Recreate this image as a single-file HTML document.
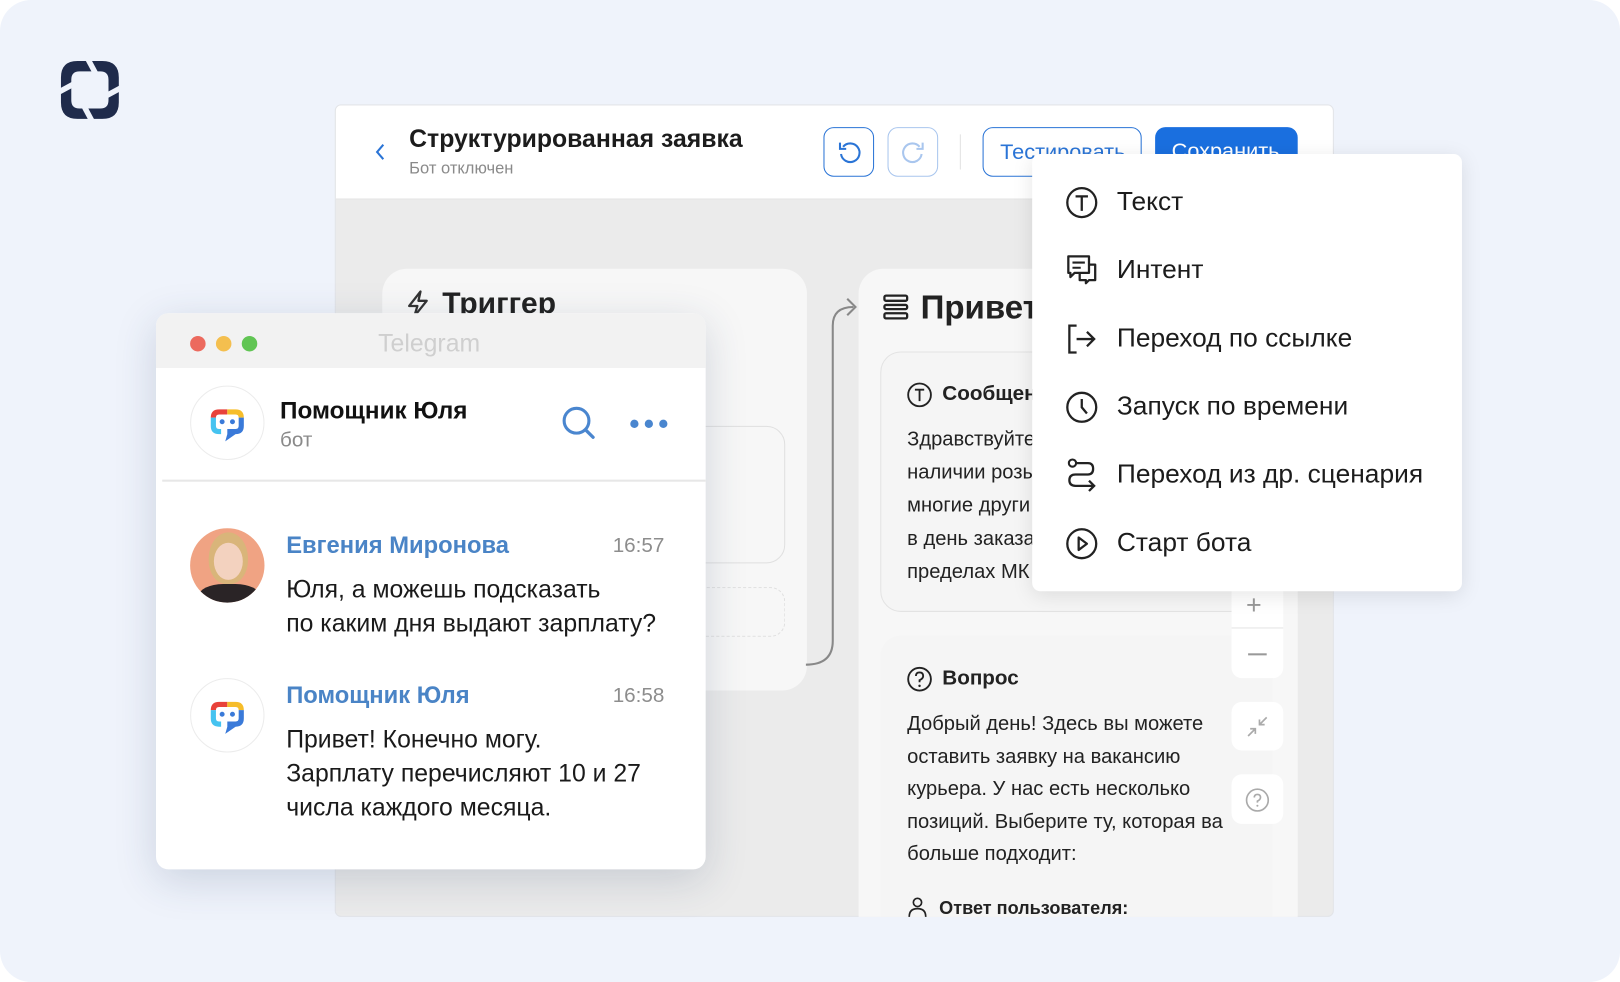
<!DOCTYPE html>
<html><head><meta charset="utf-8"><style>
*{box-sizing:border-box;margin:0;padding:0}
html,body{width:1620px;height:982px;overflow:hidden;background:#fff}
body{font-family:"Liberation Sans","Noto Sans CJK SC",sans-serif}
#w{position:absolute;left:0;top:0;width:1568px;height:950px;transform:scale(1.0332,1.0337);transform-origin:0 0;background:#eff3fb;border-radius:30px;overflow:hidden}
.a{position:absolute}
.t{position:absolute;white-space:nowrap}
</style></head><body><div id="w">
<!-- logo -->
<svg class="a" style="left:57px;top:57px" width="60" height="60" viewBox="0 0 60 60"><path fill-rule="evenodd" d="M18 2 H42 Q58 2 58 18 V42 Q58 58 42 58 H18 Q2 58 2 42 V18 Q2 2 18 2 Z M20 12 Q12 12 12 20 V40 Q12 48 20 48 H40 Q48 48 48 40 V20 Q48 12 40 12 Z" fill="#1f2b4b"/><g fill="#eff3fb"><polygon points="25,0 31,0 38,13 32,13"/><polygon points="60,25 60,31 47,38 47,32"/><polygon points="35,60 29,60 22,47 28,47"/><polygon points="0,35 0,29 13,22 13,28"/></g></svg>

<!-- app window -->
<div class="a" style="left:324px;top:101px;width:967px;height:786px;background:#ebebeb;border-radius:6px;overflow:hidden;border:1px solid #e2e4e8">
 <div class="a" style="left:0;top:0;width:967px;height:91px;background:#fff;border-bottom:1px solid #e4e4e4"></div>
</div>
<svg class="a" style="left:360px;top:137px" width="16" height="20"><path d="M11 3 L5 10 L11 17" stroke="#2a74d6" stroke-width="2" fill="none"/></svg>
<div class="t" style="left:396px;top:121px;font-size:24px;font-weight:bold;color:#1c1c1c">Структурированная заявка</div>
<div class="t" style="left:396px;top:155px;font-size:16px;color:#8a8a8a">Бот отключен</div>
<div class="a" style="left:797px;top:123px;width:49px;height:48px;border:1.5px solid #2a74d6;border-radius:10px"></div>
<svg class="a" style="left:808px;top:134px" width="28" height="28" viewBox="0 0 28 28"><path d="M8 8 A9 9 0 1 1 6 15" stroke="#2a74d6" stroke-width="2" fill="none"/><path d="M5 4 V10 H11" stroke="#2a74d6" stroke-width="2" fill="none"/></svg>
<div class="a" style="left:859px;top:123px;width:49px;height:48px;border:1.5px solid #a9c6ee;border-radius:10px"></div>
<svg class="a" style="left:870px;top:134px" width="28" height="28" viewBox="0 0 28 28"><path d="M20 8 A9 9 0 1 0 22 15" stroke="#a9c6ee" stroke-width="2" fill="none"/><path d="M23 4 V10 H17" stroke="#a9c6ee" stroke-width="2" fill="none"/></svg>
<div class="a" style="left:929px;top:130px;width:1px;height:34px;background:#e2e2e2"></div>
<div class="a" style="left:951px;top:123px;width:154px;height:48px;border:1.5px solid #2a74d6;border-radius:10px;overflow:hidden"><div class="t" style="left:16px;top:12px;font-size:21px;color:#2a74d6">Тестировать</div></div>
<div class="a" style="left:1118px;top:123px;width:138px;height:48px;background:#1a6fdf;border-radius:10px;overflow:hidden"><div class="t" style="left:16px;top:12px;font-size:21px;color:#fff">Сохранить</div></div>

<!-- trigger card -->
<div class="a" style="left:370px;top:260px;width:411px;height:408px;background:#f7f7f7;border-radius:24px"></div>
<svg class="a" style="left:392px;top:280px" width="26" height="28" viewBox="0 0 26 28"><path d="M15 2 L4 16 H12 L9 26 L21 11 H13 Z" stroke="#333" stroke-width="2.2" fill="none" stroke-linejoin="round"/></svg>
<div class="t" style="left:428px;top:278px;font-size:29px;font-weight:bold;color:#222">Триггер</div>
<div class="a" style="left:660px;top:412px;width:100px;height:133px;border:1px solid #e0e0e0;border-radius:18px"></div>
<div class="a" style="left:660px;top:568px;width:100px;height:48px;border:1.5px dashed #e0e0e0;border-radius:14px"></div>
<svg class="a" style="left:778px;top:285px" width="60" height="370"><path d="M2 358 Q28 358 28 335 V30 Q28 12 48 12" stroke="#888" stroke-width="2" fill="none"/><path d="M42 4 L50 12 L42 20" stroke="#888" stroke-width="2" fill="none"/></svg>

<!-- greeting card -->
<div class="a" style="left:831px;top:260px;width:425px;height:627px;background:#f7f7f7;border-radius:24px 24px 0 0"></div>
<svg class="a" style="left:854px;top:284px" width="26" height="26"><rect x="2" y="2" width="22" height="5" rx="1.5" stroke="#222" stroke-width="2.2" fill="none"/><rect x="2" y="11" width="22" height="4" rx="1.5" stroke="#222" stroke-width="2.2" fill="none"/><rect x="2" y="19" width="22" height="5" rx="1.5" stroke="#222" stroke-width="2.2" fill="none"/></svg>
<div class="t" style="left:891px;top:279px;font-size:32px;font-weight:bold;color:#222">Привет</div>
<div class="a" style="left:852px;top:340px;width:360px;height:252px;border:1px solid #e3e3e3;border-radius:20px;background:#f5f5f5"></div>
<svg class="a" style="left:877px;top:369px" width="26" height="26"><circle cx="13" cy="13" r="11" stroke="#222" stroke-width="1.8" fill="none"/><path d="M8.5 8 H17.5 M13 8 V19" stroke="#222" stroke-width="1.8"/></svg>
<div class="t" style="left:912px;top:370px;font-size:20px;font-weight:bold;color:#222">Сообщение</div>
<div class="a" style="left:878px;top:409px;font-size:19.5px;line-height:32px;color:#222;white-space:nowrap">Здравствуйте<br>наличии розы<br>многие други<br>в день заказа<br>пределах МК</div>
<div class="a" style="left:852px;top:615px;width:380px;height:272px;background:#f5f5f5;border-radius:20px 20px 0 0"></div>
<svg class="a" style="left:877px;top:644px" width="26" height="26"><circle cx="13" cy="13" r="11" stroke="#222" stroke-width="1.8" fill="none"/><path d="M9.5 10 Q9.5 6.5 13 6.5 Q16.5 6.5 16.5 10 Q16.5 12.5 13 14 V16" stroke="#222" stroke-width="1.8" fill="none"/><circle cx="13" cy="19.5" r="1.2" fill="#222"/></svg>
<div class="t" style="left:912px;top:645px;font-size:20px;font-weight:bold;color:#222">Вопрос</div>
<div class="a" style="left:878px;top:685px;font-size:19.5px;line-height:31.5px;color:#222;white-space:nowrap;width:306px;overflow:hidden">Добрый день! Здесь вы можете<br>оставить заявку на вакансию<br>курьера. У нас есть несколько<br>позиций. Выберите ту, которая ва<br>больше подходит:</div>
<svg class="a" style="left:877px;top:866px" width="22" height="22"><circle cx="11" cy="7" r="4" stroke="#222" stroke-width="1.6" fill="none"/><path d="M3 21 Q3 13 11 13 Q19 13 19 21" stroke="#222" stroke-width="1.6" fill="none"/></svg>
<div class="t" style="left:909px;top:868px;font-size:17.5px;font-weight:bold;color:#222">Ответ пользователя:</div>
<!-- zoom controls -->
<div class="a" style="left:1192px;top:560px;width:50px;height:96px;background:#fff;border-radius:10px"></div>
<div class="a" style="left:1192px;top:607px;width:50px;height:1px;background:#e4e4e4"></div>
<div class="t" style="left:1206px;top:570px;font-size:26px;color:#999">+</div>
<div class="a" style="left:1208px;top:632px;width:18px;height:2px;background:#999"></div>
<div class="a" style="left:1192px;top:679px;width:50px;height:47px;background:#fff;border-radius:10px"></div>
<svg class="a" style="left:1205px;top:691px" width="24" height="24"><path d="M21 3 L14 10 M14 5 V10 H19 M3 21 L10 14 M5 14 H10 V19" stroke="#aaa" stroke-width="1.6" fill="none"/></svg>
<div class="a" style="left:1192px;top:749px;width:50px;height:48px;background:#fff;border-radius:10px"></div>
<svg class="a" style="left:1204px;top:761px" width="26" height="26"><circle cx="13" cy="13" r="10.5" stroke="#aaa" stroke-width="1.6" fill="none"/><path d="M10 10.5 Q10 7.5 13 7.5 Q16 7.5 16 10.5 Q16 12.5 13 14 V15.5" stroke="#aaa" stroke-width="1.6" fill="none"/><circle cx="13" cy="18.5" r="1" fill="#aaa"/></svg>

<!-- dropdown -->
<div class="a" style="left:999px;top:149px;width:416px;height:423px;background:#fff;border-radius:8px;box-shadow:0 4px 20px rgba(0,0,0,.1)"></div>
<svg class="a" style="left:1031px;top:180px" width="32" height="32"><circle cx="16" cy="16" r="14" stroke="#222" stroke-width="2.2" fill="none"/><path d="M10 10 H22 M16 10 V24" stroke="#222" stroke-width="2.2"/></svg>
<svg class="a" style="left:1031px;top:245px" width="32" height="32"><path d="M3 3 H23 V19 H9 L5 23 V19 H3 Z" stroke="#222" stroke-width="2.2" fill="none" stroke-linejoin="round"/><path d="M7 9 H19 M7 14 H15" stroke="#222" stroke-width="2"/><path d="M23 11 H29 V26 H23 L20 29 V26 H14 V19" stroke="#222" stroke-width="2.2" fill="none" stroke-linejoin="round"/></svg>
<svg class="a" style="left:1031px;top:312px" width="32" height="32"><path d="M11 3 H4 V29 H11" stroke="#222" stroke-width="2.2" fill="none"/><path d="M11 16 H28 M21 9 L28 16 L21 23" stroke="#222" stroke-width="2.2" fill="none"/></svg>
<svg class="a" style="left:1031px;top:378px" width="32" height="32"><circle cx="16" cy="16" r="14" stroke="#222" stroke-width="2.2" fill="none"/><path d="M16 8 V16 L21 22" stroke="#222" stroke-width="2.2" fill="none"/></svg>
<svg class="a" style="left:1031px;top:443px" width="32" height="34"><circle cx="7" cy="5" r="3.5" stroke="#222" stroke-width="2" fill="none"/><path d="M11 5 H22 Q27 5 27 10.5 Q27 16 22 16 H10 Q4 16 4 21.5 Q4 27 10 27 H28 M23 22 L28 27 L23 32" stroke="#222" stroke-width="2.2" fill="none"/></svg>
<svg class="a" style="left:1031px;top:510px" width="32" height="32"><circle cx="16" cy="16" r="14" stroke="#222" stroke-width="2.2" fill="none"/><path d="M13 10 L21 16 L13 22 Z" stroke="#222" stroke-width="2.2" fill="none" stroke-linejoin="round"/></svg>
<div class="t" style="left:1081px;top:181px;font-size:25.5px;color:#1c1c1c">Текст</div>
<div class="t" style="left:1081px;top:247px;font-size:25.5px;color:#1c1c1c">Интент</div>
<div class="t" style="left:1081px;top:313px;font-size:25.5px;color:#1c1c1c">Переход по ссылке</div>
<div class="t" style="left:1081px;top:379px;font-size:25.5px;color:#1c1c1c">Запуск по времени</div>
<div class="t" style="left:1081px;top:445px;font-size:25.5px;color:#1c1c1c">Переход из др. сценария</div>
<div class="t" style="left:1081px;top:511px;font-size:25.5px;color:#1c1c1c">Старт бота</div>

<!-- telegram window -->
<div class="a" style="left:151px;top:303px;width:532px;height:538px;background:#fff;border-radius:12px;overflow:hidden;box-shadow:0 10px 40px rgba(40,60,100,.18)">
 <div class="a" style="left:0;top:0;width:532px;height:53px;background:#f2f2f2"></div>
</div>
<div class="a" style="left:184px;top:325px;width:15px;height:15px;border-radius:50%;background:#ec6a5e"></div>
<div class="a" style="left:209px;top:325px;width:15px;height:15px;border-radius:50%;background:#f4bf4f"></div>
<div class="a" style="left:234px;top:325px;width:15px;height:15px;border-radius:50%;background:#61c554"></div>
<div class="t" style="left:366px;top:319px;font-size:24px;color:#cfcfcf">Telegram</div>
<div class="a" style="left:184px;top:373px;width:72px;height:72px;border-radius:50%;border:1.5px solid #ececec;background:#fff"></div>
<svg class="a" style="left:200px;top:390px" width="40" height="40" viewBox="0 0 40 40"><path d="M4 14 Q4 6 12 6 H20 V11 H12 Q9 11 9 14 Z" fill="#e8423a"/><path d="M20 6 H28 Q36 6 36 14 H31 Q31 11 28 11 H20 Z" fill="#f6bd2a"/><path d="M4 14 H9 V22 Q9 25 12 25 H14 V30 H12 Q4 30 4 22 Z" fill="#45c3f0"/><path d="M31 14 H36 V22 Q36 30 28 30 L18 37 L20 30 H20 V25 H28 Q31 25 31 22 Z" fill="#3a7ad9"/><circle cx="15" cy="18" r="2.4" fill="#3a7ad9"/><circle cx="25" cy="18" r="2.4" fill="#3a7ad9"/></svg>
<div class="t" style="left:271px;top:384px;font-size:23.5px;font-weight:bold;color:#111">Помощник Юля</div>
<div class="t" style="left:271px;top:415px;font-size:20px;color:#8a8a8a">бот</div>
<svg class="a" style="left:542px;top:391px" width="36" height="36"><circle cx="16" cy="16" r="12" stroke="#4a86cf" stroke-width="3" fill="none"/><path d="M25 25 L32 32" stroke="#4a86cf" stroke-width="3.2" stroke-linecap="round"/></svg>
<div class="a" style="left:610px;top:406px;width:8px;height:8px;border-radius:50%;background:#4a86cf"></div>
<div class="a" style="left:624px;top:406px;width:8px;height:8px;border-radius:50%;background:#4a86cf"></div>
<div class="a" style="left:638px;top:406px;width:8px;height:8px;border-radius:50%;background:#4a86cf"></div>
<div class="a" style="left:157px;top:464px;width:526px;height:2px;background:#e7e7e7"></div>

<div class="a" style="left:184px;top:511px;width:72px;height:72px;border-radius:50%;background:#f0a383;overflow:hidden">
 <div class="a" style="left:18px;top:4px;width:38px;height:50px;border-radius:50% 50% 45% 45%;background:#d9b57a"></div>
 <div class="a" style="left:23px;top:14px;width:28px;height:36px;border-radius:50%;background:#f3d2bf"></div>
 <div class="a" style="left:8px;top:54px;width:60px;height:30px;border-radius:40% 40% 0 0;background:#2a2426"></div>
</div>
<div class="t" style="left:277px;top:514px;font-size:23px;font-weight:bold;color:#4a84c6">Евгения Миронова</div>
<div class="t" style="left:593px;top:517px;font-size:20px;color:#8d8d8d">16:57</div>
<div class="a" style="left:277px;top:554px;font-size:24px;line-height:33px;color:#1a1a1a;white-space:nowrap">Юля, а можешь подсказать<br>по каким дня выдают зарплату?</div>

<div class="a" style="left:184px;top:656px;width:72px;height:72px;border-radius:50%;border:1.5px solid #ececec;background:#fff"></div>
<svg class="a" style="left:200px;top:673px" width="40" height="40" viewBox="0 0 40 40"><path d="M4 14 Q4 6 12 6 H20 V11 H12 Q9 11 9 14 Z" fill="#e8423a"/><path d="M20 6 H28 Q36 6 36 14 H31 Q31 11 28 11 H20 Z" fill="#f6bd2a"/><path d="M4 14 H9 V22 Q9 25 12 25 H14 V30 H12 Q4 30 4 22 Z" fill="#45c3f0"/><path d="M31 14 H36 V22 Q36 30 28 30 L18 37 L20 30 H20 V25 H28 Q31 25 31 22 Z" fill="#3a7ad9"/><circle cx="15" cy="18" r="2.4" fill="#3a7ad9"/><circle cx="25" cy="18" r="2.4" fill="#3a7ad9"/></svg>
<div class="t" style="left:277px;top:659px;font-size:23px;font-weight:bold;color:#4a84c6">Помощник Юля</div>
<div class="t" style="left:593px;top:662px;font-size:20px;color:#8d8d8d">16:58</div>
<div class="a" style="left:277px;top:699px;font-size:24px;line-height:33px;color:#1a1a1a;white-space:nowrap">Привет! Конечно могу.<br>Зарплату перечисляют 10 и 27<br>числа каждого месяца.</div>
</div></body></html>
